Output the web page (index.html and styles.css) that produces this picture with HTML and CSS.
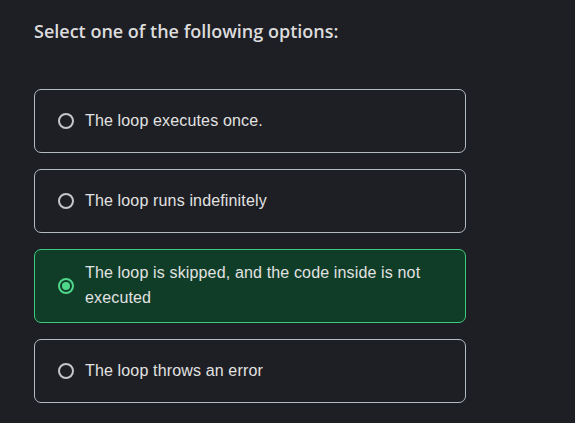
FILE: index.html
```html
<!DOCTYPE html>
<html>
<head>
<meta charset="utf-8">
<link rel="stylesheet" href="styles.css">
</head>
<body>
<div class="page">
  <h2 class="title">Select one of the following options:</h2>
  <div class="options">
    <label class="option">
      <span class="radio"></span>
      <span class="text">The loop executes once.</span>
    </label>
    <label class="option">
      <span class="radio"></span>
      <span class="text">The loop runs indefinitely</span>
    </label>
    <label class="option selected">
      <span class="radio"><span class="dot"></span></span>
      <span class="text">The loop is skipped, and the code inside is not executed</span>
    </label>
    <label class="option">
      <span class="radio"></span>
      <span class="text">The loop throws an error</span>
    </label>
  </div>
</div>
</body>
</html>
```

FILE: styles.css
```css
html, body {
  margin: 0;
  padding: 0;
  background: #1e1f24;
  height: 100%;
}
.page {
  padding: 18px 34px 0 34px;
}
.title {
  margin: 0;
  font-family: "Open Sans", sans-serif;
  font-weight: 600;
  font-size: 18px;
  line-height: 26px;
  color: #dcdcdc;
}
.options {
  margin-top: 45px;
  width: 432px;
  display: flex;
  flex-direction: column;
  gap: 16px;
}
.option {
  box-sizing: border-box;
  min-height: 64px;
  display: flex;
  align-items: center;
  padding: 10px 20px 12px 23px;
  border: 1px solid #b3bcc2;
  border-radius: 7px;
  background: #1e1f24;
  font-family: "Liberation Sans", Arial, sans-serif;
  font-size: 16px;
  letter-spacing: 0.15px;
  line-height: 25px;
  color: #e2e2e2;
}
.radio {
  box-sizing: border-box;
  flex: 0 0 16px;
  width: 16px;
  height: 16px;
  border: 2px solid #c4c7c9;
  border-radius: 50%;
  margin-right: 11px;
  margin-top: 2px;
  display: flex;
  align-items: center;
  justify-content: center;
}
.option.selected {
  background: #0f3d28;
  border-color: #3fcb7e;
}
.option.selected .radio {
  border-color: #4fd68b;
}
.dot {
  width: 8px;
  height: 8px;
  border-radius: 50%;
  background: #4fd68b;
}
```
